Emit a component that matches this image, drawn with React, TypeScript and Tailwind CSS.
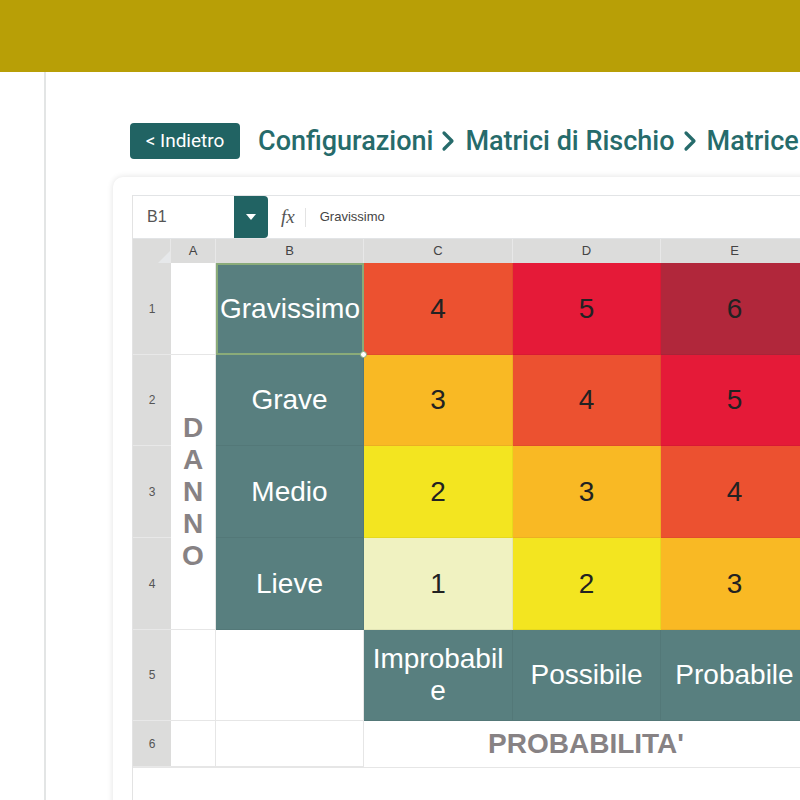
import React from "react";

const TEAL = "bg-[#587f7f]";

function Chevron() {
  return (
    <svg width="16" height="22" viewBox="0 0 16 22" className="ml-[7px] mr-[9px] shrink-0">
      <polyline points="4,3 12,11 4,19" fill="none" stroke="#266b6b" strokeWidth="3.2" strokeLinecap="round" strokeLinejoin="round" />
    </svg>
  );
}

export default function App() {
  const colHdr = "bg-[#dcdcdb] border-r border-[#e8e8e8] flex items-center justify-center text-[13px] text-[#444]";
  const rowHdr = "bg-[#dcdcdb] border-b border-[#e8e8e8] flex items-center justify-center text-[12px] text-[#555]";
  const white = "bg-white border-r border-b border-[#e6e6e6]";
  const num = "flex items-center justify-center text-[28px] text-[#222] border-r border-b border-black/5";
  const teal = `${TEAL} flex items-center justify-center text-center text-[28px] leading-[32px] text-white border-r border-b border-black/5`;

  return (
    <div className="w-[800px] h-[800px] overflow-hidden bg-white font-['Roboto',sans-serif]">
      <div className="h-[72px] bg-[#b89f06]" />
      <div className="flex h-[728px]">
        <div className="w-[46px] shrink-0 border-r-2 border-[#e3e5e5]" />
        <div className="flex-1 pl-[67px] pt-[51px]">
          <div className="flex items-center ml-[17px] h-[36px]">
            <div className="h-[36px] w-[110px] rounded-[4px] bg-[#216363] text-white text-[19px] flex items-center justify-center shrink-0">
              &lt; Indietro
            </div>
            <div className="ml-[18px] flex items-center text-[27px] font-medium text-[#266b6b] whitespace-nowrap leading-none">
              <span>Configurazioni</span>
              <Chevron />
              <span>Matrici di Rischio</span>
              <Chevron />
              <span>Matrice di Rischio</span>
            </div>
          </div>

          <div className="mt-[18px] w-[760px] h-[700px] rounded-[10px] bg-white shadow-[0_0_6px_rgba(0,0,0,0.12)] pt-[18px] pl-[19px]">
            <div className="border-l border-[#e3e3e3] h-full">
              {/* formula bar */}
              <div className="flex h-[44px] border border-l-0 border-[#e2e4e6] bg-white">
                <div className="w-[101px] flex items-center pl-[14px] text-[16px] text-[#555] font-['Liberation_Sans',sans-serif] rounded-l-[4px]">B1</div>
                <div className="w-[34px] bg-[#216363] rounded-r-[4px] flex items-center justify-center">
                  <svg width="10" height="8" viewBox="0 0 10 8"><polygon points="0,1 10,1 5,7" fill="white" /></svg>
                </div>
                <div className="flex items-center pl-[13px]">
                  <span className="font-['Liberation_Serif',serif] italic text-[19px] text-[#555]">fx</span>
                  <span className="ml-[10px] w-px h-[19px] bg-[#e3e3e3]" />
                  <span className="ml-[14px] text-[13px] text-[#444] font-['Liberation_Sans',sans-serif]">Gravissimo</span>
                </div>
              </div>

              {/* grid */}
              <div className="grid grid-cols-[38px_45px_148px_149px_148px_148px_100px] grid-rows-[24px_92px_91px_92px_92px_91px_46px] font-['Liberation_Sans',Arial,sans-serif] border-b border-[#e6e6e6] w-fit">
                {/* header row */}
                <div className="bg-[#dcdcdb] border-r border-[#e8e8e8] relative overflow-hidden">
                  <div className="absolute right-0 bottom-0 w-0 h-0 border-l-[12px] border-l-transparent border-b-[12px] border-b-[#e6e8ea]" />
                </div>
                <div className={colHdr}>A</div>
                <div className={`${colHdr} bg-[#ccd5c9]`}>B</div>
                <div className={colHdr}>C</div>
                <div className={colHdr}>D</div>
                <div className={colHdr}>E</div>
                <div className={colHdr}>F</div>

                {/* row 1 */}
                <div className={`${rowHdr} bg-[#ccd5c9]`}>1</div>
                <div className={white} />
                <div className={`${TEAL} relative flex items-center justify-center text-[28px] text-white border-2 border-[#8aab79]`}>
                  Gravissimo
                  <div className="absolute right-[-5px] bottom-[-5px] w-[7px] h-[7px] rounded-full bg-white border border-[#8aab79] z-10" />
                </div>
                <div className={`${num} bg-[#ec5130]`}>4</div>
                <div className={`${num} bg-[#e51a38]`}>5</div>
                <div className={`${num} bg-[#b1273b]`}>6</div>
                <div className={`${num} bg-[#b1273b]`} />

                {/* row 2 */}
                <div className={rowHdr}>2</div>
                <div className="row-span-3 bg-white border-r border-b border-[#e6e6e6] flex flex-col items-center justify-center font-bold text-[28px] leading-[32px] text-[#878284]">
                  <span>D</span><span>A</span><span>N</span><span>N</span><span>O</span>
                </div>
                <div className={teal}>Grave</div>
                <div className={`${num} bg-[#f9b924]`}>3</div>
                <div className={`${num} bg-[#ec5130]`}>4</div>
                <div className={`${num} bg-[#e51a38]`}>5</div>
                <div className={`${num} bg-[#b1273b]`} />

                {/* row 3 */}
                <div className={rowHdr}>3</div>
                <div className={teal}>Medio</div>
                <div className={`${num} bg-[#f3e520]`}>2</div>
                <div className={`${num} bg-[#f9b924]`}>3</div>
                <div className={`${num} bg-[#ec5130]`}>4</div>
                <div className={`${num} bg-[#e51a38]`} />

                {/* row 4 */}
                <div className={rowHdr}>4</div>
                <div className={teal}>Lieve</div>
                <div className={`${num} bg-[#f0f2c1]`}>1</div>
                <div className={`${num} bg-[#f3e520]`}>2</div>
                <div className={`${num} bg-[#f9b924]`}>3</div>
                <div className={`${num} bg-[#ec5130]`} />

                {/* row 5 */}
                <div className={rowHdr}>5</div>
                <div className={white} />
                <div className={white} />
                <div className={`${teal} px-[6px]`}>Improbabil e</div>
                <div className={teal}>Possibile</div>
                <div className={teal}>Probabile</div>
                <div className={teal} />

                {/* row 6 */}
                <div className={rowHdr}>6</div>
                <div className={white} />
                <div className={white} />
                <div className="col-span-3 bg-white border-r border-[#e6e6e6] flex items-center justify-center font-bold text-[28px] text-[#878284]">
                  PROBABILITA'
                </div>
                <div className={white} />
              </div>
            </div>
          </div>
        </div>
      </div>
    </div>
  );
}
